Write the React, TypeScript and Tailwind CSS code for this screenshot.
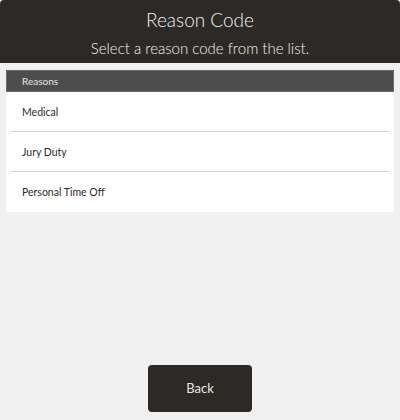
const reasons = ["Medical", "Jury Duty", "Personal Time Off"];

export default function App() {
  return (
    <div className="flex h-[420px] w-[400px] flex-col bg-[#f0f0f0] font-['Lato',sans-serif]">
      <header className="flex h-[63px] flex-col items-center rounded-t-[4px] bg-[#2d2926] text-[#f2f2f2]">
        <h1 className="mt-[6px] text-[19px] leading-[28px] font-light">Reason Code</h1>
        <p className="mt-[4px] text-[15px] leading-[20px] font-light">
          Select a reason code from the list.
        </p>
      </header>

      <section className="mx-[6px] mt-[7px]">
        <div className="flex h-[22px] items-center border border-[#6a6a6a] bg-[#4d4d4d] px-[15px] text-[10px] text-[#e6e6e6]">
          Reasons
        </div>
        <ul className="bg-white px-[5px]">
          {reasons.map((r, i) => (
            <li
              key={r}
              className={`flex h-[40px] items-center px-[11px] pt-[2px] text-[10.5px] text-[#2b2b2b] ${
                i < reasons.length - 1 ? "border-b border-[#d0d0d0]" : ""
              }`}
            >
              {r}
            </li>
          ))}
        </ul>
      </section>

      <div className="mt-auto mb-[8px] flex justify-center">
        <button className="h-[47px] w-[104px] rounded-[4px] bg-[#2d2926] text-[13px] text-[#e8e8e8]">
          Back
        </button>
      </div>
    </div>
  );
}
